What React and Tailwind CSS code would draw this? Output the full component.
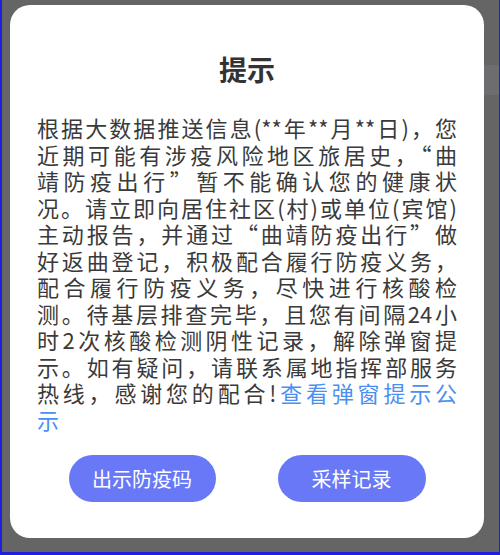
const lines = [
  ["根据大数据推送信息(**年**月**日)，您"],
  ["近期可能有涉疫风险地区旅居史，“曲"],
  ["靖防疫出行”暂不能确认您的健康状"],
  ["况。请立即向居住社区(村)或单位(宾馆)"],
  ["主动报告，并通过“曲靖防疫出行”做"],
  ["好返曲登记，积极配合履行防疫义务，"],
  ["配合履行防疫义务，尽快进行核酸检"],
  ["测。待基层排查完毕，且您有间隔24小"],
  ["时2次核酸检测阴性记录，解除弹窗提"],
  ["示。如有疑问，请联系属地指挥部服务"],
];

export default function App() {
  return (
    <div className="relative w-[500px] h-[555px] overflow-hidden bg-[#656565] border-l-[2px] border-r-[1px] border-b-[3px] border-[#1f1fe0]" style={{ fontFamily: '"Noto Sans CJK SC", "Noto Sans", sans-serif' }}>
      <div className="mt-[65px] ml-auto w-[40px] h-[30px] bg-[#6d6d70]" />
      <div className="absolute top-[5px] left-[8px] w-[474px] h-[533px] bg-white rounded-[20px] pt-[44px] px-[27px] flex flex-col">
        <h1 className="text-center text-[28px] leading-[40px] font-bold text-[#333]">提示</h1>
        <div className="mt-[25px] text-[22px] leading-[26.5px] text-[#3a3a3a]">
          {lines.map((l, i) => (
            <div key={i} className="whitespace-nowrap text-justify [text-align-last:justify] [text-justify:inter-character]">{l[0]}</div>
          ))}
          <div className="whitespace-nowrap text-justify [text-align-last:justify] [text-justify:inter-character]">
            热线，感谢您的配合!<span className="text-[#4b8ff0]">查看弹窗提示公</span>
          </div>
          <div className="text-[#4b8ff0]">示</div>
        </div>
        <div className="mt-[23px] flex justify-center gap-[62px]">
          <button className="w-[147px] h-[47px] rounded-full bg-[#6878f6] text-white text-[20px]">出示防疫码</button>
          <button className="w-[148px] h-[47px] rounded-full bg-[#6878f6] text-white text-[20px]">采样记录</button>
        </div>
      </div>
    </div>
  );
}
